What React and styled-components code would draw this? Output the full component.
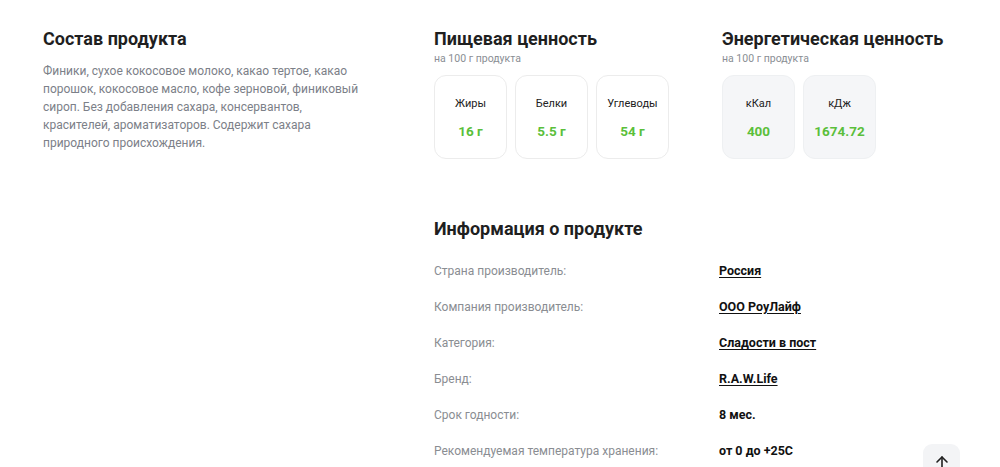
import React from 'react';
import styled, { createGlobalStyle } from 'styled-components';

const GlobalStyle = createGlobalStyle`
    body {
        margin: 0;
        background: #fff;
        font-family: Roboto, "Noto Sans", sans-serif;
        color: #1f1f1f;
    }
`

const Page = styled.div`
    padding: 28px 43px 0 43px;
`

const TopRow = styled.div`
    display: grid;
    grid-template-columns: 391px 288px 1fr;
`

const Title = styled.h2`
    margin: 0;
    font-size: 18px;
    line-height: 22px;
    font-weight: 700;
    color: #1f1f1f;
    white-space: nowrap;
`

const Subtitle = styled.div`
    margin-top: 2px;
    font-size: 10.5px;
    line-height: 14px;
    color: #8a8e94;
`

const Text = styled.p`
    margin: 12px 0 0;
    width: 316px;
    font-size: 12px;
    line-height: 18px;
    color: #7c8088;
`

const Cards = styled.div`
    display: flex;
    gap: 8px;
    margin-top: 9px;
`

const Card = styled.div`
    width: 73px;
    height: 84px;
    box-sizing: border-box;
    border-radius: 12px;
    border: 1px solid ${({ $filled }) => ($filled ? '#eef0f2' : '#ececec')};
    background: ${({ $filled }) => ($filled ? '#f5f6f8' : '#fff')};
    display: flex;
    flex-direction: column;
    align-items: center;
    padding-top: 21px;
`

const CardLabel = styled.div`
    font-size: 11px;
    line-height: 14px;
    color: #222;
`

const CardValue = styled.div`
    margin-top: 11px;
    font-size: 13.5px;
    line-height: 18px;
    font-weight: 700;
    color: #5bbf3b;
`

const InfoSection = styled.div`
    margin: 59px 0 0 391px;
`

const InfoList = styled.div`
    margin-top: 22px;
    display: grid;
    grid-template-columns: 285px 1fr;
    row-gap: 18px;
`

const InfoLabel = styled.div`
    font-size: 12px;
    line-height: 18px;
    color: #8a8d92;
`

const InfoValue = styled.div`
    font-size: 12.5px;
    line-height: 18px;
    font-weight: 700;
    color: #111;
    text-decoration: ${({ $link }) => ($link ? 'underline' : 'none')};
    text-underline-offset: 2px;
`

const UpButton = styled.button`
    position: fixed;
    left: 923px;
    top: 444px;
    width: 37px;
    height: 37px;
    border: none;
    border-radius: 9px;
    background: #f3f4f6;
    display: flex;
    align-items: flex-start;
    justify-content: center;
    padding: 11px 0 0;
`

const nutrition = [
    { label: 'Жиры', value: '16 г' },
    { label: 'Белки', value: '5.5 г' },
    { label: 'Углеводы', value: '54 г' },
]

const energy = [
    { label: 'кКал', value: '400' },
    { label: 'кДж', value: '1674.72' },
]

const info = [
    { label: 'Страна производитель:', value: 'Россия', link: true },
    { label: 'Компания производитель:', value: 'ООО РоуЛайф', link: true },
    { label: 'Категория:', value: 'Сладости в пост', link: true },
    { label: 'Бренд:', value: 'R.A.W.Life', link: true },
    { label: 'Срок годности:', value: '8 мес.' },
    { label: 'Рекомендуемая температура хранения:', value: 'от 0 до +25C' },
]

const App = () => {
    return (
        <Page>
            <GlobalStyle />
            <TopRow>
                <div>
                    <Title>Состав продукта</Title>
                    <Text>
                        Финики, сухое кокосовое молоко, какао тертое, какао порошок, кокосовое масло, кофе зерновой, финиковый сироп. Без добавления сахара, консервантов, красителей, ароматизаторов. Содержит сахара природного происхождения.
                    </Text>
                </div>
                <div>
                    <Title>Пищевая ценность</Title>
                    <Subtitle>на 100 г продукта</Subtitle>
                    <Cards>
                        {nutrition.map((n) => (
                            <Card key={n.label}>
                                <CardLabel>{n.label}</CardLabel>
                                <CardValue>{n.value}</CardValue>
                            </Card>
                        ))}
                    </Cards>
                </div>
                <div>
                    <Title>Энергетическая ценность</Title>
                    <Subtitle>на 100 г продукта</Subtitle>
                    <Cards>
                        {energy.map((n) => (
                            <Card key={n.label} $filled>
                                <CardLabel>{n.label}</CardLabel>
                                <CardValue>{n.value}</CardValue>
                            </Card>
                        ))}
                    </Cards>
                </div>
            </TopRow>
            <InfoSection>
                <Title>Информация о продукте</Title>
                <InfoList>
                    {info.map((i) => (
                        <React.Fragment key={i.label}>
                            <InfoLabel>{i.label}</InfoLabel>
                            <InfoValue $link={i.link}>{i.value}</InfoValue>
                        </React.Fragment>
                    ))}
                </InfoList>
            </InfoSection>
            <UpButton aria-label='Наверх'>
                <svg width='14' height='16' viewBox='0 0 14 16' fill='none' stroke='#1f1f1f' strokeWidth='1.6' strokeLinecap='round' strokeLinejoin='round'>
                    <path d='M7 15V2' />
                    <path d='M2 7l5-5 5 5' />
                </svg>
            </UpButton>
        </Page>
    )
}

export default App;
